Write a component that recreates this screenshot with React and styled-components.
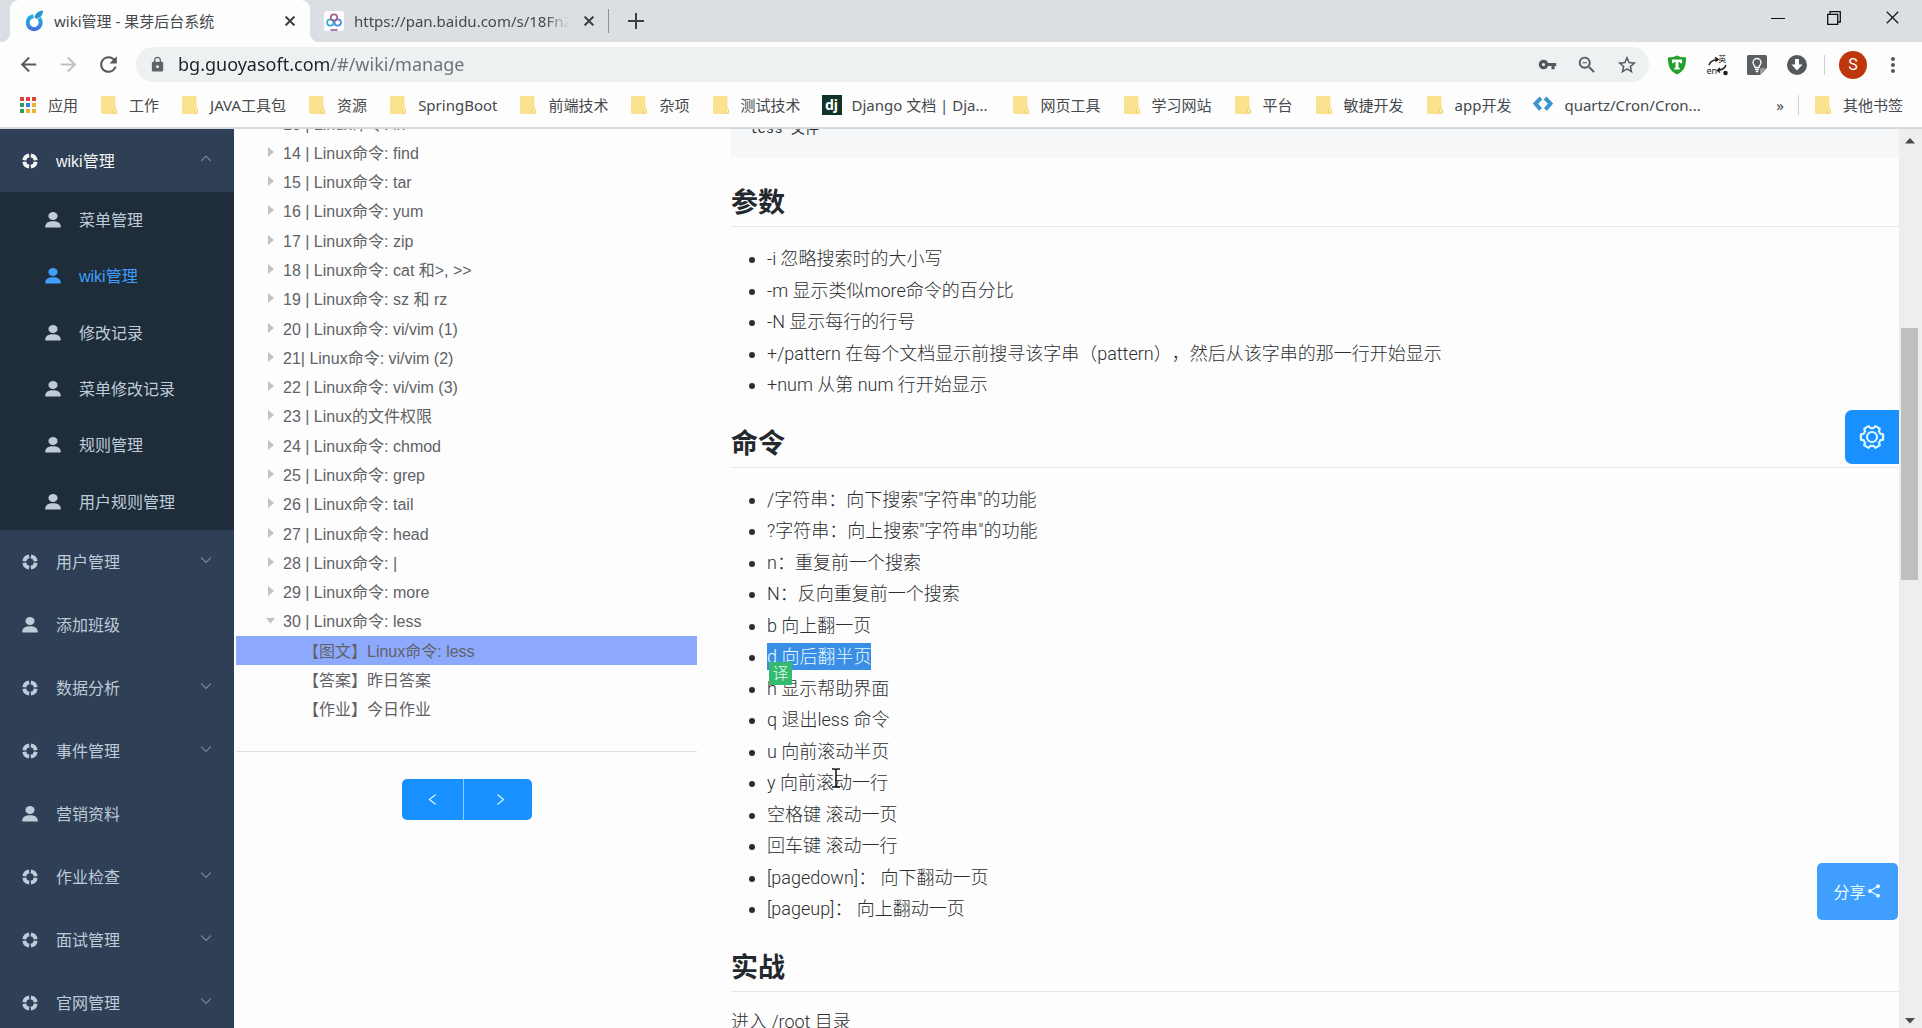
import React from "react";
import styled, { createGlobalStyle, css } from "styled-components";
import { MdArrowBack, MdArrowForward, MdRefresh, MdLock, MdVpnKey, MdZoomOut, MdStarBorder, MdMoreVert, MdShare } from "react-icons/md";
import { AiOutlineLeft, AiOutlineRight } from "react-icons/ai";

const uiFont = '"Noto Sans", "Noto Sans CJK SC", sans-serif';
const appFont = '"Liberation Sans", "Noto Sans CJK SC", sans-serif';
const articleFont = 'Roboto, "Noto Sans CJK SC", sans-serif';

const GlobalStyle = createGlobalStyle`
  * { box-sizing: border-box; }
  body { margin: 0; background: #fdfdfd; overflow: hidden; }
  button, input { font: inherit; border: 0; padding: 0; background: none; color: inherit; }
  button { cursor: pointer; }
  a { color: inherit; text-decoration: none; }
  ul { margin: 0; padding: 0; list-style: none; }
  svg { display: block; flex: none; }
`;

const Page = styled.div`
  display: flex;
  flex-direction: column;
  height: 100vh;
  font-family: ${appFont};
  font-size: 16px;
`;

/* ---------- browser frame ---------- */
const TabStrip = styled.div`
  display: flex;
  flex: none;
  height: 42px;
  padding-left: 10px;
  background: #dbdfe3;
  font: 15px/42px ${uiFont};
  color: #45494d;
`;
const Tab = styled.div`
  position: relative;
  display: flex;
  align-items: center;
  gap: 10px;
  height: 42px;
  width: ${(p) => (p.$active ? 300 : 298)}px;
  padding: 0 14px;
  ${(p) => !p.$active && css`padding-right: 9px;`}
  ${(p) =>
    p.$active &&
    css`
      background: #fdfdfd;
      border-radius: 9px 9px 0 0;
      &::before,
      &::after {
        content: "";
        position: absolute;
        bottom: 0;
        width: 9px;
        height: 9px;
      }
      &::before {
        left: -9px;
        background: radial-gradient(circle at 0 0, transparent 9px, #fdfdfd 9px);
      }
      &::after {
        right: -9px;
        background: radial-gradient(circle at 100% 0, transparent 9px, #fdfdfd 9px);
      }
    `}
`;
const TabTitle = styled.span`
  flex: 1;
  min-width: 0;
  overflow: hidden;
  white-space: nowrap;
  ${(p) => p.$fade && css`mask-image: linear-gradient(to left, transparent, #000 24px);`}
`;
const IconButton = styled.button`
  display: grid;
  place-items: center;
  flex: none;
  width: ${(p) => p.$w || 40}px;
  height: ${(p) => p.$h || 35}px;
  color: ${(p) => p.$color || "#54585c"};
`;
const TabEnd = styled.div`
  display: flex;
  align-items: center;
  gap: 8px;
`;
const Divider = styled.span`
  flex: none;
  width: 1px;
  height: ${(p) => p.$h}px;
  background: ${(p) => p.$color || "#cfd1d3"};
`;
const WindowControls = styled.div`
  display: flex;
  margin-left: auto;
`;

const Toolbar = styled.div`
  display: flex;
  align-items: center;
  flex: none;
  height: 45px;
  padding: 0 19px 0 8px;
`;
const Extensions = styled.div`
  display: flex;
  margin-right: 7px;
`;
const AddressBar = styled.div`
  display: flex;
  align-items: center;
  flex: 1;
  min-width: 0;
  height: 35px;
  margin: 0 8px;
  padding-left: 13px;
  padding-right: 2px;
  border-radius: 18px;
  background: #eef1f2;
  color: #5f6368;
`;
const AddressInput = styled.input`
  flex: 1;
  min-width: 0;
  margin-left: 12px;
  height: 35px;
  font: 18px/35px ${uiFont};
  color: transparent;
  background: linear-gradient(to right, #202124 151px, #6b6f73 151px);
  background-clip: text;
  outline: 0;
`;
const Avatar = styled.span`
  display: grid;
  place-items: center;
  width: 28px;
  height: 28px;
  border-radius: 50%;
  background: #bf360c;
  color: #fff;
  font: 16px/28px Roboto, sans-serif;
`;

const BookmarkBar = styled.nav`
  display: flex;
  align-items: center;
  gap: 21px;
  flex: none;
  height: 42px;
  padding: 0 19px 4px 18px;
  border-bottom: 2px solid #d5d8da;
  font: 15px/24px ${uiFont};
  color: #45494d;
`;
const Bookmark = styled.a`
  display: flex;
  align-items: center;
  gap: 10px;
  white-space: nowrap;
`;
const BookmarkLabel = styled.span`
  ${(p) => p.$wide && css`width: 138px;`}
`;
const BookmarkEnd = styled.div`
  display: flex;
  align-items: center;
  gap: 14px;
  margin-left: auto;
`;

/* ---------- application ---------- */
const Body = styled.div`
  position: relative;
  display: flex;
  flex: 1;
  min-height: 0;
  overflow: hidden;
`;
const Sidebar = styled.nav`
  flex: none;
  width: 234px;
  overflow: hidden;
  background: #2f3f55;
  color: #bfcbd9;
`;
const MenuButton = styled.button`
  display: flex;
  align-items: center;
  gap: 18px;
  width: 100%;
  height: 63px;
  padding: 0 23px 0 22px;
  color: ${(p) => (p.$open ? "#f4f4f5" : "#bfcbd9")};
  text-align: left;
`;
const MenuLabel = styled.span`
  flex: 1;
  padding-bottom: 2px;
`;
const ChevronSlot = styled.span`
  padding-bottom: 4px;
`;
const SubMenu = styled.ul`
  display: grid;
  grid-auto-rows: 1fr;
  height: 338px;
  background: #1f2d3b;
`;
const SubLink = styled.a`
  display: flex;
  align-items: center;
  gap: 18px;
  height: 100%;
  padding-left: 45px;
  color: ${(p) => (p.$active ? "#409eff" : "#bfcbd9")};
`;

const TreePane = styled.aside`
  flex: none;
  width: 461px;
  margin-left: 2px;
`;
const Tree = styled.ul`
  display: grid;
  grid-auto-rows: 1fr;
  height: 615px;
  margin-top: -20px;
`;
const TreeNode = styled.button`
  display: flex;
  align-items: center;
  gap: 8px;
  width: 100%;
  height: 100%;
  padding-left: ${(p) => (p.$child ? 67 : 30)}px;
  padding-bottom: 2px;
  color: #606266;
  white-space: nowrap;
  background: ${(p) => (p.$active ? "#8da9fd" : "none")};
`;
const Pager = styled.div`
  display: flex;
  justify-content: center;
  margin-top: 27px;
  padding-top: 27px;
  border-top: 1px solid #dcdfe6;
`;
const PagerButton = styled.button`
  display: grid;
  place-items: center;
  width: ${(p) => (p.$next ? 68 : 62)}px;
  height: 41px;
  background: #1890ff;
  color: #e6fbff;
  border-radius: ${(p) => (p.$next ? "0 5px 5px 0" : "5px 0 0 5px")};
  ${(p) => (p.$next ? css`padding-left: 6px;` : css`border-right: 1px solid #8ccbff;`)}
`;

const Article = styled.article`
  flex: 1;
  min-width: 0;
  margin-left: 34px;
  margin-top: -28px;
  font-family: ${articleFont};
  font-size: 18px;
  font-weight: 300;
  line-height: 27px;
  color: #2c2e30;
  text-spacing-trim: space-all;
`;
const Code = styled.pre`
  margin: 0 0 27px;
  padding: 18px;
  background: #f6f7f9;
  font: 14px/21px "Liberation Mono", "Noto Sans CJK SC", monospace;
`;
const Heading = styled.h2`
  margin: 25px 0 16px;
  padding-bottom: 5px;
  border-bottom: 1px solid #e6e7e9;
  font-size: 27px;
  line-height: 36px;
  font-weight: 700;
  color: #24292e;
`;
const Bullets = styled.ul`
  padding-left: 36px;
  list-style: disc;
  line-height: 1.75;
`;
const Selected = styled.mark`
  position: relative;
  display: inline-block;
  line-height: 27px;
  background: #3a8ee6;
  color: #e8fbff;
`;
const TranslateBadge = styled.button`
  position: absolute;
  left: 2px;
  top: 19px;
  width: 23px;
  height: 23px;
  background: #35bb70;
  color: #e8fff2;
  font-size: 16px;
  line-height: 23px;
`;
const PointerHost = styled.span`
  position: relative;
`;
const TextCursor = styled.svg`
  position: absolute;
  left: -2px;
  top: -4px;
`;
const Paragraph = styled.p`
  margin: 0;
`;

const ScrollTrack = styled.div`
  display: flex;
  flex-direction: column;
  align-items: center;
  flex: none;
  width: 23px;
  padding: 9px 2px 4px 0;
  background: #eeeeee;
`;
const ScrollThumb = styled.div`
  width: 17px;
  height: 252px;
  margin-top: 184px;
  margin-bottom: auto;
  background: #bfbfbf;
`;
const SettingsButton = styled.button`
  position: absolute;
  right: 23px;
  top: 281px;
  display: grid;
  place-items: center;
  width: 54px;
  height: 54px;
  border-radius: 7px 0 0 7px;
  background: #1890ff;
  color: #dff8ff;
`;
const ShareButton = styled.button`
  position: absolute;
  right: 24px;
  bottom: 108px;
  display: flex;
  align-items: center;
  justify-content: center;
  width: 81px;
  height: 57px;
  padding-bottom: 2px;
  border-radius: 5px;
  background: #409eff;
  color: #e4fbff;
`;

/* ---------- drawings ---------- */
const CloseIcon = ({ size = 10, w = 2, color = "#3c4043" }) => (
  <svg width={size} height={size} viewBox="0 0 10 10" stroke={color} strokeWidth={w} fill="none">
    <path d="M.6.6l8.8 8.8M9.4.6L.6 9.4" />
  </svg>
);
const FruitIcon = () => (
  <svg width="20" height="26" viewBox="0 0 20 26" fill="none">
    <defs>
      <linearGradient id="fruit" x1="0" y1="5" x2="0" y2="23" gradientUnits="userSpaceOnUse">
        <stop offset="0" stopColor="#22b8dc" />
        <stop offset=".5" stopColor="#2a9be6" />
        <stop offset="1" stopColor="#4a6bd6" />
      </linearGradient>
    </defs>
    <path d="M9.500 8.200a6.500 6.500 0 1 0 5.600 2.200" stroke="url(#fruit)" strokeWidth="4" />
    <path d="M10.500 9.500C11 5.500 14 3 19 2.500c0 4-2 7-6.500 8.500z" fill="#2796cf" />
  </svg>
);
const BaiduIcon = () => (
  <svg width="20" height="20" viewBox="0 0 20 20" fill="none">
    <rect width="20" height="20" rx="3" fill="#fdfdfd" />
    <circle cx="6.300" cy="11.500" r="3.200" stroke="#35a9d6" strokeWidth="1.700" />
    <circle cx="13.700" cy="11.500" r="3.200" stroke="#4a8be0" strokeWidth="1.700" />
    <circle cx="10" cy="6.500" r="3.200" stroke="#a5618c" strokeWidth="1.700" />
    <path d="M6.500 19h7" stroke="#7a4a88" strokeWidth="1.400" />
  </svg>
);
const FolderIcon = () => (
  <svg width="20" height="20" viewBox="0 0 20 20">
    <path d="M3.500 1h11.500a1.500 1.500 0 0 1 1.500 1.500v10.500l1.300 1v3.500a1.500 1.500 0 0 1-1.500 1.500H3.500A1.500 1.500 0 0 1 2 17.500v-15A1.500 1.500 0 0 1 3.500 1z" fill="#fbe28f" />
    <path d="M14.500 18.500v-4l1.500-1.500 1.500 1.500V18z" fill="#fdeeb4" stroke="#eccb62" strokeWidth=".8" />
  </svg>
);
const AppsIcon = () => (
  <svg width="20" height="20" viewBox="0 0 20 20">
    {["#d9453d", "#d9453d", "#d9453d", "#2f9e57", "#3b7de0", "#e8b32c", "#2f9e57", "#e8b32c", "#e8b32c"].map((c, i) => (
      <rect key={i} x={2 + (i % 3) * 6} y={2 + Math.floor(i / 3) * 6} width="4" height="4" fill={c} />
    ))}
  </svg>
);
const DjangoBox = styled.span`
  display: grid;
  place-items: center;
  width: 20px;
  height: 20px;
  background: #103528;
  color: #fff;
  font: 700 14px/18px ${uiFont};
`;
const QuartzIcon = () => (
  <svg width="22" height="20" viewBox="0 0 22 20" fill="none" stroke="#3c93cf" strokeWidth="4">
    <path d="M9 3L3.500 8.500l5 6M13 3l5.500 5.500-5 6" />
  </svg>
);
const ShieldIcon = () => (
  <svg width="20" height="20" viewBox="0 0 20 20">
    <path d="M10 .5C7.500 2 4 2.500 1 2.300c0 7.700 1 13.700 9 17.200 8-3.500 9-9.500 9-17.200-3 .2-6.500-.3-9-1.800z" fill="#1fa32c" />
    <path d="M5 4.500h10v3.800h-1.700l-.4-1.300h-1.400v5.800h1.200V14.500H7.300v-1.700h1.200V7H7.100l-.4 1.300H5z" fill="#fff" />
  </svg>
);
const TranslateBox = styled.span`
  display: grid;
  grid-template-columns: 1fr 1fr;
  width: 21px;
  height: 22px;
  color: #222;
  font: 8px/10px ${uiFont};
  & > :first-child { grid-column: 2; }
  & > :last-child { grid-column: 1; font-size: 9px; align-self: end; }
`;
const TranslateGlyph = styled.span`
  display: grid;
  place-items: center;
  & > * { grid-area: 1 / 1; }
`;
const BulbIcon = () => (
  <svg width="20" height="20" viewBox="0 0 20 20" fill="none">
    <path d="M1.500 0h17A1.500 1.500 0 0 1 20 1.500V13l-7 7H1.500A1.500 1.500 0 0 1 0 18.500v-17A1.500 1.500 0 0 1 1.500 0z" fill="#5c5f61" />
    <path d="M13 20v-5.500a1.500 1.500 0 0 1 1.500-1.500H20z" fill="#9a9c9e" />
    <path d="M8 12.500c0-1.800-2-2.500-2-5a4 4 0 0 1 8 0c0 2.500-2 3.200-2 5zM8 14.500h4M8.800 16.500h2.400" stroke="#fff" strokeWidth="1.300" />
  </svg>
);
const DownloadIcon = () => (
  <svg width="20" height="20" viewBox="0 0 20 20">
    <circle cx="10" cy="10" r="10" fill="#55585a" />
    <path d="M8 4h4v5.500h3.500L10 15.500 4.500 9.500H8z" fill="#fff" />
  </svg>
);
const HelpIcon = () => (
  <svg width="16" height="16" viewBox="0 0 16 16" fill="none">
    <circle cx="8" cy="8" r="5.800" stroke="currentColor" strokeWidth="3.800" pathLength="100" strokeDasharray="20 5" strokeDashoffset="-2.500" />
  </svg>
);
const UserIcon = () => (
  <svg width="16" height="16" viewBox="0 0 16 16" fill="currentColor">
    <ellipse cx="8" cy="4" rx="4.600" ry="4" />
    <path d="M.3 15.500v-1.200C.3 11 3.500 9.200 8 9.200s7.700 1.800 7.700 5.100v1.200z" />
  </svg>
);
const Chevron = ({ up }) => (
  <ChevronSlot>
    <svg width="10" height="10" viewBox="0 0 10 10" fill="none" stroke="#78869a" strokeWidth="1.200">
      <path d={up ? "M0 7L5 2l5 5" : "M0 2.500l5 5 5-5"} />
    </svg>
  </ChevronSlot>
);
const Caret = ({ open }) => (
  <svg width="9" height="10" viewBox="0 0 9 10" fill="#bfc2c8">
    <path d={open ? "M0 3h9L4.500 8.500z" : "M2 0v10l6-5z"} />
  </svg>
);
const ScrollArrow = ({ down }) => (
  <svg width="10" height="6" viewBox="0 0 10 6" fill="#4a4a4a">
    <path d={down ? "M0 0h10L5 5.500z" : "M0 5.500h10L5 0z"} />
  </svg>
);
const gearPoints = Array.from({ length: 6 }, (_, k) =>
  [[-20, 9], [-13, 11.4], [13, 11.4], [20, 9]].map(([offset, r]) => {
    const a = ((k * 60 + offset) * Math.PI) / 180;
    return `${14 + r * Math.cos(a)},${14 + r * Math.sin(a)}`;
  }).join(" ")
).join(" ");
const GearIcon = () => (
  <svg width="28" height="28" viewBox="0 0 28 28" fill="none" stroke="currentColor" strokeWidth="2.200" strokeLinejoin="round">
    <polygon points={gearPoints} />
    <circle cx="14" cy="14" r="5" />
  </svg>
);

/* ---------- data ---------- */
const bookmarks = [
  { label: "应用", icon: <AppsIcon /> },
  { label: "工作" },
  { label: "JAVA工具包" },
  { label: "资源" },
  { label: "SpringBoot" },
  { label: "前端技术" },
  { label: "杂项" },
  { label: "测试技术" },
  { label: "Django 文档 | Dja...", icon: <DjangoBox>dj</DjangoBox>, wide: true },
  { label: "网页工具" },
  { label: "学习网站" },
  { label: "平台" },
  { label: "敏捷开发" },
  { label: "app开发" },
  { label: "quartz/Cron/Cron...", icon: <QuartzIcon />, wide: true },
];
const subItems = ["菜单管理", "wiki管理", "修改记录", "菜单修改记录", "规则管理", "用户规则管理"];
const menuItems = [
  ["用户管理", true],
  ["添加班级", false],
  ["数据分析", true],
  ["事件管理", true],
  ["营销资料", false],
  ["作业检查", true],
  ["面试管理", true],
  ["官网管理", true],
];
const treeItems = [
  "13 | Linux命令: ln",
  "14 | Linux命令: find",
  "15 | Linux命令: tar",
  "16 | Linux命令: yum",
  "17 | Linux命令: zip",
  "18 | Linux命令: cat 和>, >>",
  "19 | Linux命令: sz 和 rz",
  "20 | Linux命令: vi/vim (1)",
  "21| Linux命令: vi/vim (2)",
  "22 | Linux命令: vi/vim (3)",
  "23 | Linux的文件权限",
  "24 | Linux命令: chmod",
  "25 | Linux命令: grep",
  "26 | Linux命令: tail",
  "27 | Linux命令: head",
  "28 | Linux命令: |",
  "29 | Linux命令: more",
  "30 | Linux命令: less",
];
const lessons = ["【图文】Linux命令: less", "【答案】昨日答案", "【作业】今日作业"];
const params = [
  "-i 忽略搜索时的大小写",
  "-m 显示类似more命令的百分比",
  "-N 显示每行的行号",
  "+/pattern 在每个文档显示前搜寻该字串（pattern），然后从该字串的那一行开始显示",
  "+num 从第 num 行开始显示",
];

export default function App() {
  return (
    <Page>
      <GlobalStyle />
      <TabStrip>
        <Tab $active>
          <FruitIcon />
          <TabTitle>wiki管理 - 果芽后台系统</TabTitle>
          <IconButton $w={12} $h={20} aria-label="关闭标签页"><CloseIcon /></IconButton>
        </Tab>
        <Tab>
          <BaiduIcon />
          <TabTitle $fade>https://pan.baidu.com/s/18FnZ</TabTitle>
          <IconButton $w={20} $h={20} aria-label="关闭标签页"><CloseIcon /></IconButton>
        </Tab>
        <TabEnd>
          <Divider $h={24} $color="#8f9396" />
          <IconButton $w={38} aria-label="新标签页">
            <svg width="16" height="16" viewBox="0 0 16 16" stroke="#3c4043" strokeWidth="2"><path d="M8 0v16M0 8h16" /></svg>
          </IconButton>
        </TabEnd>
        <WindowControls>
          <IconButton $w={56} aria-label="最小化">
            <svg width="14" height="14" viewBox="0 0 14 14" stroke="#111"><path d="M0 7.500h14" /></svg>
          </IconButton>
          <IconButton $w={56} aria-label="还原">
            <svg width="14" height="14" viewBox="0 0 14 14" fill="none" stroke="#111" strokeWidth="1.300"><path d="M.7 3.300h10v10h-10zM3 3V.7h10.300V11H11" /></svg>
          </IconButton>
          <IconButton $w={60} aria-label="关闭"><CloseIcon size={13} w={0.9} color="#111" /></IconButton>
        </WindowControls>
      </TabStrip>

      <Toolbar>
        <IconButton aria-label="后退"><MdArrowBack size={23} /></IconButton>
        <IconButton aria-label="前进" $color="#bdbfc1"><MdArrowForward size={23} /></IconButton>
        <IconButton aria-label="刷新"><MdRefresh size={25} /></IconButton>
        <AddressBar>
          <MdLock size={17} />
          <AddressInput aria-label="地址" defaultValue="bg.guoyasoft.com/#/wiki/manage" />
          <IconButton aria-label="密码"><MdVpnKey size={19} /></IconButton>
          <IconButton aria-label="缩放"><MdZoomOut size={22} /></IconButton>
          <IconButton aria-label="收藏"><MdStarBorder size={22} /></IconButton>
        </AddressBar>
        <Extensions>
          <IconButton aria-label="防护"><ShieldIcon /></IconButton>
          <IconButton aria-label="翻译">
            <TranslateGlyph>
              <svg width="21" height="22" viewBox="0 0 21 22" fill="none" stroke="#222" strokeWidth="1.600">
                <path d="M2 11c1-3 4-5 8-5.500M19 11c-1 3-4 5-8 5.500M8 3.500l3 2-2.500 2M13 14l-2.500 2.500 2.500 2" />
                <circle cx="18.500" cy="19" r="1.500" fill="#222" />
              </svg>
              <TranslateBox><span>英</span><span>en</span></TranslateBox>
            </TranslateGlyph>
          </IconButton>
          <IconButton aria-label="提示"><BulbIcon /></IconButton>
          <IconButton aria-label="下载"><DownloadIcon /></IconButton>
        </Extensions>
        <Divider $h={20} />
        <IconButton $w={56} aria-label="用户"><Avatar>S</Avatar></IconButton>
        <IconButton $w={22} aria-label="菜单"><MdMoreVert size={24} /></IconButton>
      </Toolbar>

      <BookmarkBar>
        {bookmarks.map((b) => (
          <Bookmark key={b.label} href="#">
            {b.icon || <FolderIcon />}
            <BookmarkLabel $wide={b.wide}>{b.label}</BookmarkLabel>
          </Bookmark>
        ))}
        <BookmarkEnd>
          <span>»</span>
          <Divider $h={20} />
          <Bookmark href="#"><FolderIcon />其他书签</Bookmark>
        </BookmarkEnd>
      </BookmarkBar>

      <Body>
        <Sidebar>
          <MenuButton $open>
            <HelpIcon />
            <MenuLabel>wiki管理</MenuLabel>
            <Chevron up />
          </MenuButton>
          <SubMenu>
            {subItems.map((s) => (
              <li key={s}>
                <SubLink href="#" $active={s === "wiki管理"}><UserIcon /><MenuLabel>{s}</MenuLabel></SubLink>
              </li>
            ))}
          </SubMenu>
          {menuItems.map(([label, expandable]) => (
            <MenuButton key={label}>
              {expandable ? <HelpIcon /> : <UserIcon />}
              <MenuLabel>{label}</MenuLabel>
              {expandable && <Chevron />}
            </MenuButton>
          ))}
        </Sidebar>

        <TreePane>
          <Tree>
            {treeItems.map((t, i) => (
              <li key={t}>
                <TreeNode><Caret open={i === treeItems.length - 1} />{t}</TreeNode>
              </li>
            ))}
            {lessons.map((t, i) => (
              <li key={t}>
                <TreeNode $child $active={i === 0}>{t}</TreeNode>
              </li>
            ))}
          </Tree>
          <Pager>
            <PagerButton aria-label="上一页"><AiOutlineLeft size={15} /></PagerButton>
            <PagerButton $next aria-label="下一页"><AiOutlineRight size={15} /></PagerButton>
          </Pager>
        </TreePane>

        <Article>
          <Code>less 文件</Code>
          <Heading>参数</Heading>
          <Bullets>{params.map((p) => <li key={p}>{p}</li>)}</Bullets>
          <Heading>命令</Heading>
          <Bullets>
            <li>/字符串：向下搜索"字符串"的功能</li>
            <li>?字符串：向上搜索"字符串"的功能</li>
            <li>n：重复前一个搜索</li>
            <li>N：反向重复前一个搜索</li>
            <li>b 向上翻一页</li>
            <li><Selected>d 向后翻半页<TranslateBadge>译</TranslateBadge></Selected></li>
            <li>h 显示帮助界面</li>
            <li>q 退出less 命令</li>
            <li>u 向前滚动半页</li>
            <li>
              y 向前滚
              <PointerHost>
                动一行
                <TextCursor width="8" height="20" viewBox="0 0 8 20" fill="none" stroke="#111" strokeWidth="1.500">
                  <path d="M0 1h3l1 1 1-1h3M4 2v16M0 19h3l1-1 1 1h3" />
                </TextCursor>
              </PointerHost>
            </li>
            <li>空格键 滚动一页</li>
            <li>回车键 滚动一行</li>
            <li>[pagedown]： 向下翻动一页</li>
            <li>[pageup]： 向上翻动一页</li>
          </Bullets>
          <Heading>实战</Heading>
          <Paragraph>进入 /root 目录</Paragraph>
        </Article>

        <ScrollTrack>
          <ScrollArrow />
          <ScrollThumb />
          <ScrollArrow down />
        </ScrollTrack>
        <SettingsButton aria-label="设置"><GearIcon /></SettingsButton>
        <ShareButton>分享<MdShare size={16} /></ShareButton>
      </Body>
    </Page>
  );
}
